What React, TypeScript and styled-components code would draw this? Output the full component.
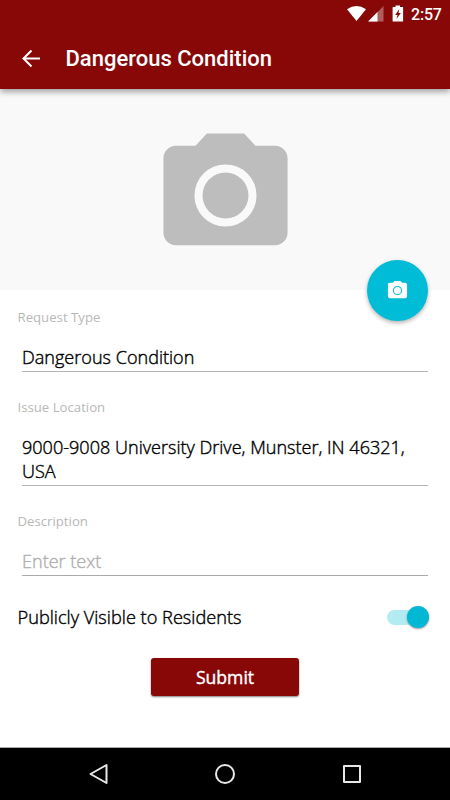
import React from "react";
import styled, { createGlobalStyle } from "styled-components";

const GlobalStyle = createGlobalStyle`
  * { box-sizing: border-box; }
  body { margin: 0; background: #fff; }
`;

const Screen = styled.div`
  width: 450px;
  height: 800px;
  display: flex;
  flex-direction: column;
  overflow: hidden;
  background: #fff;
  font-family: "Open Sans", "Noto Sans", sans-serif;
`;

const Header = styled.header`
  position: relative;
  z-index: 1;
  flex: none;
  height: 89px;
  background: #880808;
  color: #fff;
  font-family: Roboto, sans-serif;
  box-shadow: 0 3px 6px rgba(0, 0, 0, 0.35);
`;

const StatusBar = styled.div`
  height: 29px;
  display: flex;
  justify-content: flex-end;
  padding-right: 9px;
`;

const StatusIcons = styled.svg`
  width: 64px;
  height: 29px;
  display: block;
`;

const Clock = styled.time`
  font-size: 16px;
  line-height: 29px;
  font-weight: 500;
  width: 30px;
  white-space: nowrap;
  letter-spacing: -0.2px;
`;

const TitleBar = styled.div`
  height: 60px;
  display: flex;
  align-items: center;
  padding-left: 20.5px;
  gap: 25px;
`;

const BackIcon = styled.svg`
  width: 20px;
  height: 20px;
`;

const Title = styled.h1`
  margin: 0;
  font-size: 22px;
  font-weight: 500;
  line-height: 30px;
`;

const Photo = styled.section`
  position: relative;
  flex: none;
  height: 201px;
  padding-top: 32px;
  display: flex;
  justify-content: center;
  background: #f9f9f9;
`;

const PhotoIcon = styled.svg`
  width: 149px;
  height: 149px;
`;

const CameraButton = styled.button`
  position: absolute;
  right: 22px;
  bottom: -31px;
  width: 61px;
  height: 61px;
  padding: 0;
  border: 0;
  border-radius: 50%;
  display: flex;
  align-items: center;
  justify-content: center;
  background: #00bcd6;
  box-shadow: 0 2px 4px rgba(0, 0, 0, 0.3);
`;

const ButtonIcon = styled.svg`
  width: 23px;
  height: 23px;
`;

const Form = styled.main`
  flex: 1;
  padding: 17px 22px 0 17.5px;
`;

const Field = styled.div<{ $height: number }>`
  height: ${(p) => p.$height}px;
`;

const Label = styled.div`
  font-size: 13.2px;
  font-weight: 400;
  line-height: 20px;
  color: #b8b8b8;
`;

const Value = styled.div<{ $hint?: boolean }>`
  margin: 18px 0 0 4.5px;
  padding-bottom: 2px;
  border-bottom: 1px solid ${(p) => (p.$hint ? "#aaa" : "#b5b5b5")};
  font-size: 18.07px;
  font-weight: 300;
  line-height: 24px;
  color: ${(p) => (p.$hint ? "#b0b0b0" : "#000")};
  -webkit-text-stroke: 0.4px ${(p) => (p.$hint ? "#b0b0b0" : "#000")};
`;

const ToggleRow = styled.div`
  height: 24px;
  margin-right: -0.5px;
  display: flex;
  justify-content: space-between;
  align-items: center;
  font-size: 18.2px;
  font-weight: 300;
  line-height: 24px;
  color: #000;
  -webkit-text-stroke: 0.4px #000;
`;

const Track = styled.span`
  width: 42px;
  height: 15px;
  border-radius: 8px;
  display: flex;
  align-items: center;
  justify-content: flex-end;
  background: #b2ebf2;
`;

const Thumb = styled.span`
  width: 22px;
  height: 22px;
  flex: none;
  border-radius: 50%;
  background: #00b8d4;
  box-shadow: 0 1px 2px rgba(0, 0, 0, 0.4);
`;

const Submit = styled.button`
  display: block;
  width: 148px;
  height: 38px;
  margin: 29px 0 0 133.5px;
  padding: 1px 0 0;
  border: 0;
  border-radius: 3px;
  background: #880808;
  color: #fff;
  font: 500 17.6px/37px "Open Sans", sans-serif;
  -webkit-text-stroke: 0.4px #fff;
  box-shadow: 0 1px 2px rgba(0, 0, 0, 0.5);
`;

const NavBar = styled.nav`
  flex: none;
  height: 53px;
  border-top: 1px solid #aaa;
  background: #000;
`;

const NavIcons = styled.svg`
  display: block;
  width: 450px;
  height: 52px;
`;

function Camera({ ring, lens }: { ring: number; lens: number }) {
  return (
    <>
      <path
        fillRule="evenodd"
        d={`M9 2 7.17 4H4C2.9 4 2 4.9 2 6v12c0 1.1.9 2 2 2h16c1.1 0 2-.9 2-2V6c0-1.1-.9-2-2-2h-3.17L15 2zM${12 - ring} 12a${ring} ${ring} 0 1 0 ${ring * 2} 0a${ring} ${ring} 0 1 0 ${-ring * 2} 0z`}
      />
      <circle cx="12" cy="12" r={lens} />
    </>
  );
}

export default function App() {
  return (
    <Screen>
      <GlobalStyle />
      <Header>
        <StatusBar>
          <StatusIcons viewBox="347 0 64 29" fill="#fff">
            <path d="M347 9.2Q356.500 3 366 9.200L356.500 21z" />
            <path d="M383.500 6v15.500H368.500z" opacity=".35" />
            <path d="M377.500 12v9.500H368z" />
            <path
              fillRule="evenodd"
              d="M395.500 5.500h4.500V7h2.500q.6 0 .6.600v13.300q0 .600-.6.600h-9.300q-.600 0-.600-.600V7.600q0-.600.600-.600h2.300zM399.200 9l-4 6h2.300l-1 4 4.300-6h-2.300z"
            />
          </StatusIcons>
          <Clock>2:57</Clock>
        </StatusBar>
        <TitleBar>
          <BackIcon viewBox="0 0 20 20" fill="none" stroke="#fff" strokeWidth="2">
            <path d="M19 9.500H3M10.500 1.500l-8 8 8 8" />
          </BackIcon>
          <Title>Dangerous Condition</Title>
        </TitleBar>
      </Header>
      <Photo>
        <PhotoIcon viewBox="0 0 24 24" fill="#bdbdbd">
          <Camera ring={5} lens={3.7} />
        </PhotoIcon>
        <CameraButton aria-label="Take photo">
          <ButtonIcon viewBox="0 0 24 24" fill="#fff">
            <Camera ring={4.8} lens={3.7} />
          </ButtonIcon>
        </CameraButton>
      </Photo>
      <Form>
        <Field $height={90}>
          <Label>Request Type</Label>
          <Value>Dangerous Condition</Value>
        </Field>
        <Field $height={114}>
          <Label>Issue Location</Label>
          <Value>9000-9008 University Drive, Munster, IN 46321, USA</Value>
        </Field>
        <Field $height={94}>
          <Label>Description</Label>
          <Value $hint>Enter text</Value>
        </Field>
        <ToggleRow>
          Publicly Visible to Residents
          <Track role="switch" aria-checked="true">
            <Thumb />
          </Track>
        </ToggleRow>
        <Submit>Submit</Submit>
      </Form>
      <NavBar>
        <NavIcons viewBox="0 748 450 52" fill="none" stroke="#e8e8e8" strokeWidth="2" strokeLinejoin="round">
          <path d="M90.500 774l16-9v18z" />
          <circle cx="225" cy="774" r="9" />
          <rect x="344" y="766" width="16" height="16" />
        </NavIcons>
      </NavBar>
    </Screen>
  );
}
